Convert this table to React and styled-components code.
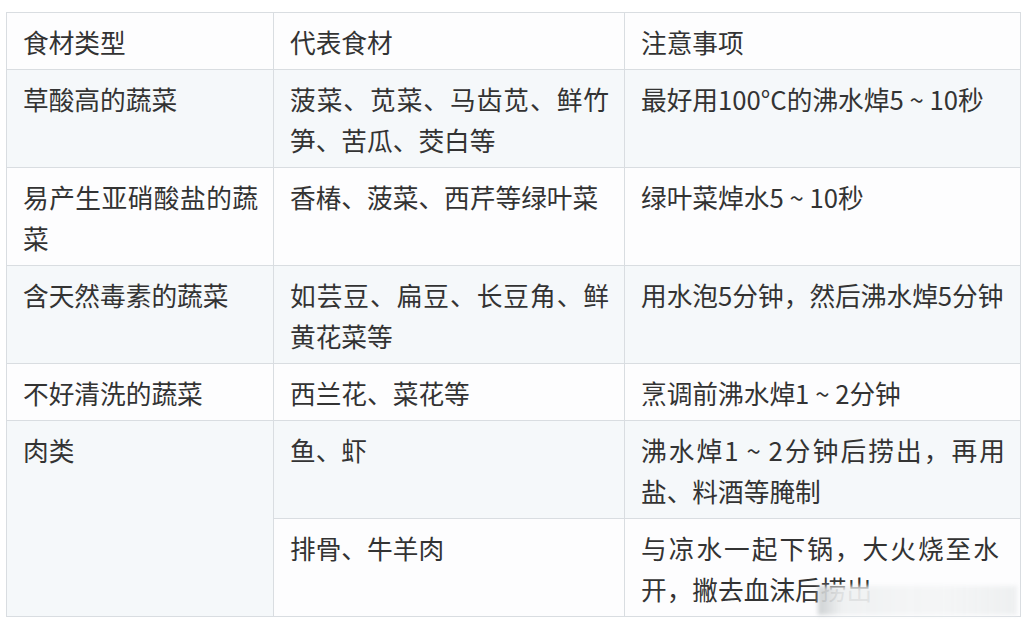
import React from "react";
import styled, { createGlobalStyle } from "styled-components";

const GlobalStyle = createGlobalStyle`
  html, body {
    margin: 0;
    padding: 0;
    background: #ffffff;
  }
  body {
    font-family: "Noto Sans CJK SC", "Noto Sans", sans-serif;
    color: #333333;
  }
`;

// [代表食材, 注意事项, 注意事项一栏是否收窄换行]
const rows = [
  {
    type: "草酸高的蔬菜",
    items: [["菠菜、苋菜、马齿苋、鲜竹笋、苦瓜、茭白等", "最好用100°C的沸水焯5 ~ 10秒"]],
  },
  {
    type: "易产生亚硝酸盐的蔬菜",
    items: [["香椿、菠菜、西芹等绿叶菜", "绿叶菜焯水5 ~ 10秒"]],
  },
  {
    type: "含天然毒素的蔬菜",
    items: [["如芸豆、扁豆、长豆角、鲜黄花菜等", "用水泡5分钟，然后沸水焯5分钟"]],
  },
  {
    type: "不好清洗的蔬菜",
    items: [["西兰花、菜花等", "烹调前沸水焯1 ~ 2分钟"]],
  },
  {
    type: "肉类",
    items: [
      ["鱼、虾", "沸水焯1 ~ 2分钟后捞出，再用盐、料酒等腌制"],
      ["排骨、牛羊肉", "与凉水一起下锅，大火烧至水开，撇去血沫后捞出", true],
    ],
  },
];

export default function App() {
  let stripe = 0;
  return (
    <>
      <GlobalStyle />
      <Page>
        <Table>
          <colgroup>
            <col style={{ width: 267 }} />
            <col style={{ width: 351 }} />
            <col style={{ width: 396 }} />
          </colgroup>
          <thead>
            <tr>
              <HeadCell>食材类型</HeadCell>
              <HeadCell>代表食材</HeadCell>
              <HeadCell>注意事项</HeadCell>
            </tr>
          </thead>
          <tbody>
            {rows.map((row) =>
              row.items.map(([food, note, narrow], i) => {
                const tinted = stripe++ % 2 === 0;
                return (
                  <tr key={row.type + i}>
                    {i === 0 && (
                      <Cell rowSpan={row.items.length} $tinted={tinted}>
                        {row.type}
                      </Cell>
                    )}
                    <Cell $tinted={tinted}>{food}</Cell>
                    <Cell $tinted={tinted} $narrow={narrow}>
                      {note}
                    </Cell>
                  </tr>
                );
              })
            )}
          </tbody>
        </Table>
        <Watermark />
      </Page>
    </>
  );
}

const Page = styled.div`
  position: relative;
  padding: 12px 0 0 6px;
  width: 1029px;
  height: 627px;
  box-sizing: border-box;
`;

const Table = styled.table`
  border-collapse: collapse;
  table-layout: fixed;
  width: 1014px;
  font-size: 25.7px;
  line-height: 41px;
`;

const HeadCell = styled.th`
  text-align: left;
  font-weight: 400;
  vertical-align: top;
  padding: 7.5px 15px 7.5px 16px;
  border: 1px solid #d9dde1;
  background: #fdfdfe;
  color: #333333;
`;

const Cell = styled.td`
  vertical-align: top;
  text-align: justify;
  padding: 7.5px ${(p) => (p.$narrow ? "21px" : "15px")} 7.5px 16px;
  border: 1px solid #d9dde1;
  background: ${(p) => (p.$tinted ? "#f5f8fa" : "#fdfdfe")};
  color: #333333;
`;

const Watermark = styled.div`
  position: absolute;
  left: 818px;
  top: 586px;
  width: 199px;
  height: 29px;
  background: linear-gradient(
    90deg,
    rgba(200, 204, 206, 0.9) 0%,
    rgba(238, 240, 241, 0.92) 12%,
    rgba(244, 245, 246, 0.93) 60%,
    rgba(236, 238, 239, 0.9) 100%
  );
  filter: blur(2px);
`;
